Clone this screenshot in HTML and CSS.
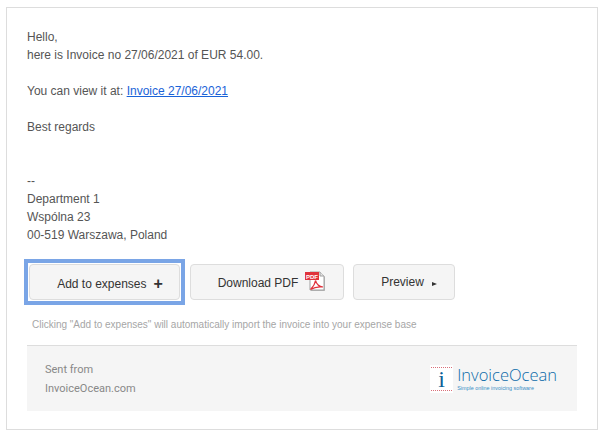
FILE: index.html
```html
<!DOCTYPE html>
<html lang="en">
<head>
  <meta charset="UTF-8">
  <title>Invoice 27/06/2021</title>
  <link rel="stylesheet" href="styles.css">
</head>
<body>
  <div class="mail">
    <div class="mail-body">
      <p class="block">Hello,<br>here is Invoice no 27/06/2021 of EUR 54.00.</p>
      <p class="block">You can view it at: <a href="#">Invoice 27/06/2021</a></p>
      <p class="block">Best regards</p>
      <p class="block signature">--<br>Department 1<br>Wspólna 23<br>00-519 Warszawa, Poland</p>
    </div>

    <div class="actions">
      <div class="focus-ring">
        <a class="btn btn-add" href="#">Add to expenses <span class="plus">+</span></a>
      </div>
      <a class="btn btn-pdf" href="#">Download PDF
        <svg class="pdf-icon" width="21" height="21" viewBox="0 0 21 21">
          <path d="M6 2H16L20 6V20H6Z" fill="#bbb"/>
          <path d="M5 1H15L19 5V19H5Z" fill="#fff" stroke="#a0a0a0"/>
          <path d="M15 1V5H19" fill="#e4e4e4" stroke="#a0a0a0"/>
          <rect x="0" y="1" width="14" height="8" fill="#e0323c"/>
          <text x="7" y="7.500" class="pdf-label">PDF</text>
          <path d="M5.500 18.500C8 16 10 13 10.500 9.500C11.500 13 14 15.500 18 16C14 15.500 9.500 16 5.500 18.500Z" fill="none" stroke="#e0323c" stroke-width="1.200"/>
        </svg>
      </a>
      <a class="btn btn-preview" href="#"><span class="preview-label">Preview</span><span class="arrow"></span></a>
    </div>

    <p class="note">Clicking "Add to expenses" will automatically import the invoice into your expense base</p>

    <div class="footer">
      <div class="sent">Sent from<br>InvoiceOcean.com</div>
      <div class="logo">
        <div class="logo-mark"><div class="logo-stripes">i</div></div>
        <div class="logo-text">
          <div class="logo-name">InvoiceOcean</div>
          <div class="logo-tag">Simple online invoicing software</div>
        </div>
      </div>
    </div>
  </div>
</body>
</html>
```

FILE: styles.css
```css
body {
  margin: 0;
  background-color: #fff;
  font-family: "Liberation Sans", Arial, sans-serif;
}

.mail {
  width: 550px;
  height: 382px;
  margin: 7px 0 0 6px;
  padding: 20px 20px 19px 20px;
  border: 1px solid #ddd;
}

.mail-body {
  font-size: 12px;
  line-height: 18px;
  color: #555;
}

.block {
  margin: 0 0 18px;
}

.signature {
  margin-top: 36px;
  margin-bottom: 0;
}

.mail-body a {
  color: #1a63d8;
}

.actions {
  display: flex;
  align-items: flex-start;
  margin-top: 15px;
  margin-left: -3px;
}

.focus-ring {
  border: 4px solid #7aa5e6;
  padding: 1px;
  margin-right: 5px;
}

.btn {
  display: flex;
  align-items: center;
  justify-content: center;
  height: 34px;
  border: 1px solid #ddd;
  border-radius: 4px;
  background-color: #f5f5f5;
  color: #333;
  font-size: 12px;
  text-decoration: none;
}

.btn-add {
  width: 138px;
  padding: 3px 0 0 11px;
  height: 31px;
}

.plus {
  margin-left: 7px;
  font-size: 16px;
  font-weight: bold;
}

.btn-pdf {
  width: 142px;
  height: 32px;
  padding: 2px 0 0 10px;
  margin-top: 5px;
}

.pdf-icon {
  margin-left: 7px;
  margin-top: -4px;
}

.pdf-label {
  fill: #fff;
  font-size: 6px;
  font-weight: bold;
  text-anchor: middle;
}

.btn-preview {
  width: 90px;
  padding-left: 10px;
  margin-top: 5px;
  margin-left: 9px;
}

.preview-label {
  margin-top: 0;
}

.arrow {
  width: 0;
  height: 0;
  margin-left: 8px;
  margin-top: 4px;
  border-left: 5px solid #333;
  border-top: 2.500px solid transparent;
  border-bottom: 2.500px solid transparent;
}

.note {
  margin: 14px 0 14px 5px;
  font-size: 10px;
  line-height: 12px;
  color: #a6a6a6;
}

.footer {
  display: flex;
  justify-content: space-between;
  align-items: center;
  height: 65px;
  border-top: 1px solid #ddd;
  background-color: #f5f5f5;
}

.sent {
  margin-left: 18px;
  font-family: Roboto, sans-serif;
  font-size: 11px;
  line-height: 19px;
  color: #888;
}

.logo {
  display: flex;
  align-items: center;
  margin-right: 20px;
}

.logo-mark {
  width: 23px;
  height: 28px;
  margin-right: 4px;
  padding: 2px 1px;
  box-sizing: border-box;
  background-color: #fff;
}

.logo-stripes {
  height: 24px;
  border-top: 1px dotted #d9707a;
  border-bottom: 1px dotted #d9707a;
  box-sizing: border-box;
  color: #0b5f96;
  font-family: "Liberation Serif", serif;
  font-size: 24px;
  line-height: 23px;
  text-align: center;
}

.logo-name {
  font-family: "Open Sans", sans-serif;
  font-weight: 300;
  font-size: 16.500px;
  line-height: 18px;
  color: #0b6aa8;
}

.logo-tag {
  margin-top: 1px;
  font-size: 5.400px;
  line-height: 6px;
  color: #3a8fc6;
}
```
